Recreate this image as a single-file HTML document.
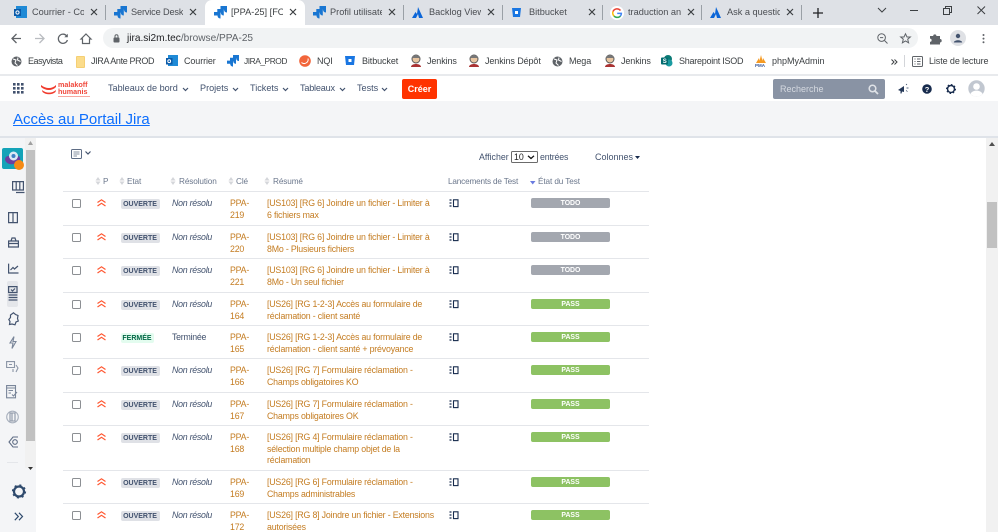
<!DOCTYPE html>
<html lang="fr"><head><meta charset="utf-8"><title>Jira</title>
<style>
html,body{margin:0;padding:0;width:998px;height:532px;overflow:hidden;background:#fff;font-family:"Liberation Sans",sans-serif;}
body{filter:blur(.3px);}
.a{position:absolute;white-space:nowrap;}
svg{position:absolute;overflow:visible;}
.tab{position:absolute;top:4px;height:17px;line-height:17px;font-size:9.2px;color:#4a4d52;white-space:nowrap;overflow:hidden;}
.x{position:absolute;top:5px;font-size:0;}
.sep{position:absolute;top:5px;width:1px;height:15px;background:#9aa0a6;}
.bm{position:absolute;top:55px;font-size:9px;line-height:12px;color:#3c4043;white-space:nowrap;letter-spacing:-.1px;}
.nav{position:absolute;top:82px;font-size:9.1px;line-height:13px;color:#42526e;white-space:nowrap;}
.row{position:absolute;left:63px;width:586px;border-top:1px solid #e4e6ea;}
.cb{position:absolute;left:9px;top:7px;width:7px;height:7px;border:1px solid #8c8f93;border-radius:1.5px;background:#fff;}
.lz{position:absolute;left:271px;}
.st{position:absolute;left:57.5px;top:7px;width:39px;height:10px;line-height:11.5px;border-radius:2px;background:#dfe1e6;color:#42526e;font-size:7px;font-weight:bold;text-align:center;}
.st.f{background:#e3fcef;color:#006644;width:33px;}
.re{position:absolute;left:109px;top:5px;font-size:8.8px;font-style:italic;color:#42526e;line-height:12px;white-space:nowrap;letter-spacing:-.25px;}
.re.n{font-style:normal;}
.k{position:absolute;left:167px;top:6px;font-size:8.8px;line-height:11.7px;color:#c47c21;letter-spacing:-.2px;}
.s{position:absolute;left:204px;top:6px;width:175px;font-size:8.8px;line-height:11.7px;color:#c47c21;white-space:nowrap;letter-spacing:-.18px;}
.bar{position:absolute;left:468px;top:6px;width:79px;height:10px;line-height:12px;border-radius:2px;font-size:6.9px;font-weight:bold;color:#fff;text-align:center;}
.t{background:#a3a7af;}
.p{background:#8dc263;}
.h{position:absolute;top:176px;font-size:8.2px;line-height:11px;color:#6b778c;white-space:nowrap;letter-spacing:-.1px;}
.so{position:absolute;top:177px;width:0;height:0;}
.sb{stroke:#44546f;stroke-width:1.2;fill:none;}
</style></head><body>

<!-- tab strip -->
<div class="a" style="left:0;top:0;width:998px;height:25px;background:#dee1e6"></div>
<div class="a" style="left:205px;top:0;width:100px;height:25px;background:#fff;border-radius:7px 7px 0 0"></div>

<svg style="left:14px;top:6px" width="14" height="13"><rect x="2" y="0" width="11" height="12" fill="#1f8ad6"/><rect x="0" y="3" width="7" height="7" fill="#0b5aa8"/><circle cx="3.5" cy="6.5" r="1.6" fill="none" stroke="#fff"/></svg>
<div class="tab" style="left:32px;width:52px">Courrier - Cor</div>
<svg class="x" style="left:90px;top:8px" width="8" height="8"><path d="M1 1L7 7M7 1L1 7" stroke="#3c4043" stroke-width="1.2"/></svg>
<div class="sep" style="left:105px"></div>

<svg style="left:114px;top:6px" width="13" height="13"><g fill="#1976d2"><path d="M6.500 0H13V6.500C11 6.500 10 5 10 3.500H6.500Z"/><path d="M3.300 3H9.800V9.500C7.800 9.500 6.800 8 6.800 6.500H3.300Z"/><path d="M0 6H6.500V12.500C4.500 12.500 3.500 11 3.500 9.500H0Z"/></g></svg>
<div class="tab" style="left:131px;letter-spacing:-.15px">Service Desk</div>
<svg class="x" style="left:189px;top:8px" width="8" height="8"><path d="M1 1L7 7M7 1L1 7" stroke="#3c4043" stroke-width="1.2"/></svg>

<svg style="left:214px;top:6px" width="13" height="13"><g fill="#1976d2"><path d="M6.500 0H13V6.500C11 6.500 10 5 10 3.500H6.500Z"/><path d="M3.300 3H9.800V9.500C7.800 9.500 6.800 8 6.800 6.500H3.300Z"/><path d="M0 6H6.500V12.500C4.500 12.500 3.500 11 3.500 9.500H0Z"/></g></svg>
<div class="tab" style="left:231px;width:52px;color:#3c4043">[PPA-25] [FOF</div>
<svg class="x" style="left:289px;top:8px" width="8" height="8"><path d="M1 1L7 7M7 1L1 7" stroke="#3c4043" stroke-width="1.2"/></svg>

<svg style="left:313px;top:6px" width="13" height="13"><g fill="#1976d2"><path d="M6.500 0H13V6.500C11 6.500 10 5 10 3.500H6.500Z"/><path d="M3.300 3H9.800V9.500C7.800 9.500 6.800 8 6.800 6.500H3.300Z"/><path d="M0 6H6.500V12.500C4.500 12.500 3.500 11 3.500 9.500H0Z"/></g></svg>
<div class="tab" style="left:330px;width:52px">Profil utilisate</div>
<svg class="x" style="left:388px;top:8px" width="8" height="8"><path d="M1 1L7 7M7 1L1 7" stroke="#3c4043" stroke-width="1.2"/></svg>
<div class="sep" style="left:403px"></div>

<svg style="left:412px;top:7px" width="12" height="12"><path d="M6 0L11 11H7L6 7 4 11H0L3.5 5 5 7Z" fill="#0c66d8"/></svg>
<div class="tab" style="left:429px;width:52px">Backlog View</div>
<svg class="x" style="left:487px;top:8px" width="8" height="8"><path d="M1 1L7 7M7 1L1 7" stroke="#3c4043" stroke-width="1.2"/></svg>
<div class="sep" style="left:502px"></div>

<svg style="left:512px;top:8px" width="11" height="10"><path d="M0 0H9L8 9H1Z" fill="#1976e2"/><rect x="3" y="3" width="3" height="3" fill="#fff"/></svg>
<div class="tab" style="left:529px">Bitbucket</div>
<svg class="x" style="left:588px;top:8px" width="8" height="8"><path d="M1 1L7 7M7 1L1 7" stroke="#3c4043" stroke-width="1.2"/></svg>
<div class="sep" style="left:602px"></div>

<svg style="left:610px;top:6px" width="14" height="14"><circle cx="7" cy="7" r="7" fill="#fff"/><path d="M10.500 4.500A4.400 4.400 0 0 0 3 5.500" fill="none" stroke="#ea4335" stroke-width="1.500"/><path d="M3 5.500A4.400 4.400 0 0 0 4 10" fill="none" stroke="#fbbc05" stroke-width="1.500"/><path d="M4 10A4.400 4.400 0 0 0 10.500 10" fill="none" stroke="#34a853" stroke-width="1.500"/><path d="M7.200 7.400H11.400A4 4 0 0 1 10.400 10" fill="none" stroke="#4285f4" stroke-width="1.500"/></svg>
<div class="tab" style="left:628px;width:53px">traduction an</div>
<svg class="x" style="left:687px;top:8px" width="8" height="8"><path d="M1 1L7 7M7 1L1 7" stroke="#3c4043" stroke-width="1.2"/></svg>
<div class="sep" style="left:701px"></div>

<svg style="left:710px;top:7px" width="12" height="12"><path d="M6 0L11 11H7L6 7 4 11H0L3.5 5 5 7Z" fill="#0c66d8"/></svg>
<div class="tab" style="left:727px;width:53px">Ask a questio</div>
<svg class="x" style="left:786px;top:8px" width="8" height="8"><path d="M1 1L7 7M7 1L1 7" stroke="#3c4043" stroke-width="1.2"/></svg>
<div class="sep" style="left:801px"></div>
<svg style="left:813px;top:8px" width="10" height="10"><path d="M5 0V10M0 5H10" stroke="#202124" stroke-width="1.3"/></svg>

<svg style="left:877px;top:7px" width="10" height="6"><path d="M1 1L5 5 9 1" fill="none" stroke="#3c4043"/></svg>
<svg style="left:910px;top:10px" width="9" height="2"><path d="M0 .5H8" stroke="#3c4043"/></svg>
<svg style="left:943px;top:6px" width="9" height="9"><path d="M.5 2.500H6.500V8.500H.5ZM2.500 2.500V.5H8.500V6.500H6.500" fill="none" stroke="#3c4043"/></svg>
<svg style="left:977px;top:6px" width="9" height="9"><path d="M.5.5L8 8M8 .5L.5 8" stroke="#3c4043"/></svg>

<!-- toolbar -->
<div class="a" style="left:0;top:25px;width:998px;height:23px;background:#fff"></div>
<svg style="left:11px;top:33px" width="11" height="11"><path d="M10 5.500H1.500M5.500 1L1 5.500 5.500 10" fill="none" stroke="#5f6368" stroke-width="1.300"/></svg>
<svg style="left:34px;top:33px" width="11" height="11"><path d="M1 5.500H9.500M5.500 1L10 5.500 5.500 10" fill="none" stroke="#b9bcc0" stroke-width="1.300"/></svg>
<svg style="left:57px;top:33px" width="12" height="11"><path d="M10 3.500A4.600 4.600 0 1 0 10.400 7" fill="none" stroke="#5f6368" stroke-width="1.300"/><path d="M10.800 0.800V4.300H7.300Z" fill="#5f6368"/></svg>
<svg style="left:80px;top:33px" width="12" height="11"><path d="M6 1L11 6H9.500V10.500H2.500V6H1Z" fill="none" stroke="#5f6368" stroke-width="1.200"/></svg>
<div class="a" style="left:103px;top:28px;width:815px;height:20px;background:#f1f3f4;border-radius:10px"></div>
<svg style="left:113px;top:34px" width="7" height="9"><rect x="0.500" y="3.500" width="6" height="5" rx="1" fill="#5f6368"/><path d="M2 4V2.200A1.500 1.500 0 0 1 5 2.200V4" fill="none" stroke="#5f6368"/></svg>
<div class="a" style="left:127px;top:32px;font-size:10.1px;line-height:13px;color:#202124">jira.si2m.tec<span style="color:#5f6368">/browse/PPA-25</span></div>
<svg style="left:877px;top:33px" width="11" height="11"><circle cx="4.600" cy="4.600" r="3.800" fill="none" stroke="#5f6368"/><path d="M7.500 7.500L10.500 10.500M3 4.600H6.200" stroke="#5f6368"/></svg>
<svg style="left:900px;top:33px" width="11" height="11"><path d="M5.500.8L7 4H10.300L7.700 6.200 8.600 9.800 5.500 7.900 2.400 9.800 3.300 6.200.7 4H4Z" fill="none" stroke="#5f6368"/></svg>
<svg style="left:930px;top:33px" width="12" height="12"><path d="M0 3H3.200A1.600 1.600 0 0 1 6.400 3H10V6A1.600 1.600 0 0 1 10 9.400V11.500H0V8.800A1.600 1.600 0 0 0 0 5.600Z" fill="#5f6368"/></svg>
<div class="a" style="left:950px;top:30px;width:16px;height:16px;border-radius:8px;background:#dfe1e5"></div>
<svg style="left:953px;top:33px" width="10" height="10"><circle cx="5" cy="3" r="2.200" fill="#44546f"/><path d="M.8 9.500C1 6.500 9 6.500 9.200 9.500Z" fill="#44546f"/></svg>
<svg style="left:982px;top:34px" width="3" height="10"><circle cx="1.500" cy="1" r="1" fill="#5f6368"/><circle cx="1.500" cy="4.600" r="1" fill="#5f6368"/><circle cx="1.500" cy="8.200" r="1" fill="#5f6368"/></svg>

<!-- bookmarks -->
<svg style="left:11px;top:56px" width="11" height="11"><circle cx="5.500" cy="5.500" r="5" fill="#5f6368"/><path d="M2 3L5 4 4 7 6.500 9.500M7 1.500L6.500 4 9.500 5.500" fill="none" stroke="#fff"/></svg>
<div class="bm" style="left:28px;letter-spacing:-.45px">Easyvista</div>
<div class="a" style="left:76px;top:56px;width:7px;height:10px;background:#fbdc8b;border:1px solid #f5cf74;border-radius:1px"></div>
<div class="bm" style="left:91px;letter-spacing:-.35px">JIRA Ante PROD</div>
<svg style="left:166px;top:55px" width="12" height="12"><rect x="2" y="0" width="10" height="11" fill="#1f8ad6"/><rect x="0" y="3" width="6.500" height="6.500" fill="#0b5aa8"/><circle cx="3.200" cy="6.200" r="1.400" fill="none" stroke="#fff"/></svg>
<div class="bm" style="left:184px">Courrier</div>
<svg style="left:227px;top:55px" width="12" height="12"><g fill="#1976d2"><path d="M6 0H12V6C10 6 9.200 4.600 9.200 3.200H6Z"/><path d="M3 2.800H9V8.800C7 8.800 6.200 7.400 6.200 6H3Z"/><path d="M0 5.600H6V11.600C4 11.600 3.200 10.200 3.200 8.800H0Z"/></g></svg>
<div class="bm" style="left:244px;font-size:8.400px;letter-spacing:-.45px">JIRA_PROD</div>
<svg style="left:299px;top:55px" width="12" height="12"><circle cx="6" cy="6" r="5.800" fill="#f2653a"/><path d="M2.500 7.500A4 4 0 0 0 9 3.500" fill="none" stroke="#fff"/></svg>
<div class="bm" style="left:317px">NQI</div>
<svg style="left:345px;top:56px" width="11" height="10"><path d="M0 0H10L9 9H1Z" fill="#1976e2"/><rect x="3.500" y="3" width="3" height="3" fill="#fff"/></svg>
<div class="bm" style="left:362px">Bitbucket</div>
<svg style="left:410px;top:54px" width="12" height="13"><path d="M1 13C1 9 11 9 11 13Z" fill="#a33"/><circle cx="6" cy="5" r="4" fill="#e8c5a0" stroke="#555"/><path d="M2 4C3 0 9 0 10 4Z" fill="#777"/></svg>
<div class="bm" style="left:427px">Jenkins</div>
<svg style="left:468px;top:54px" width="12" height="13"><path d="M1 13C1 9 11 9 11 13Z" fill="#a33"/><circle cx="6" cy="5" r="4" fill="#e8c5a0" stroke="#555"/><path d="M2 4C3 0 9 0 10 4Z" fill="#777"/></svg>
<div class="bm" style="left:485px">Jenkins Dépôt</div>
<svg style="left:552px;top:56px" width="11" height="11"><circle cx="5.500" cy="5.500" r="5" fill="#5f6368"/><path d="M2 3L5 4 4 7 6.500 9.500M7 1.500L6.500 4 9.500 5.500" fill="none" stroke="#fff"/></svg>
<div class="bm" style="left:569px">Mega</div>
<svg style="left:604px;top:54px" width="12" height="13"><path d="M1 13C1 9 11 9 11 13Z" fill="#a33"/><circle cx="6" cy="5" r="4" fill="#e8c5a0" stroke="#555"/><path d="M2 4C3 0 9 0 10 4Z" fill="#777"/></svg>
<div class="bm" style="left:621px">Jenkins</div>
<svg style="left:661px;top:55px" width="12" height="12"><circle cx="7" cy="4" r="4" fill="#0b7a75"/><circle cx="8" cy="8" r="3.500" fill="#1a9ba1"/><rect x="0" y="2.500" width="7" height="7" rx="1" fill="#036c70"/><text x="1.800" y="8" font-size="6" font-weight="bold" fill="#fff" font-family="Liberation Sans">S</text></svg>
<div class="bm" style="left:679px;letter-spacing:-.25px">Sharepoint ISOD</div>
<svg style="left:755px;top:55px" width="12" height="12"><path d="M4 8L6 0 8 8ZM1 8L4 3 5 8ZM7 8L8 3 11 8Z" fill="#f59a23"/><text x="0" y="12" font-size="4.500" font-weight="bold" fill="#3b5998" font-family="Liberation Sans">PMA</text></svg>
<div class="bm" style="left:772px;letter-spacing:0">phpMyAdmin</div>
<svg style="left:891px;top:59px" width="7" height="6"><path d="M.5.500L3 3 .5 5.500M3.500.500L6 3 3.500 5.500" fill="none" stroke="#3c4043"/></svg>
<div class="a" style="left:904px;top:55px;width:1px;height:12px;background:#d3d5d9"></div>
<svg style="left:912px;top:56px" width="11" height="11"><rect x=".5" y=".5" width="10" height="10" rx="1" fill="none" stroke="#5f6368"/><path d="M2.500 3H3.500M5 3H8.500M2.500 5.500H3.500M5 5.500H8.500M2.500 8H3.500M5 8H8.500" stroke="#5f6368"/></svg>
<div class="bm" style="left:929px">Liste de lecture</div>

<div class="a" style="left:0;top:74px;width:998px;height:2px;background:#e8eaed"></div>

<!-- jira nav -->
<div class="a" style="left:0;top:76px;width:998px;height:25px;background:#fff"></div>
<svg style="left:13px;top:83px" width="11" height="11" fill="#42526e"><rect x="0" y="0" width="2.600" height="2.600"/><rect x="4" y="0" width="2.600" height="2.600"/><rect x="8" y="0" width="2.600" height="2.600"/><rect x="0" y="4" width="2.600" height="2.600"/><rect x="4" y="4" width="2.600" height="2.600"/><rect x="8" y="4" width="2.600" height="2.600"/><rect x="0" y="8" width="2.600" height="2.600"/><rect x="4" y="8" width="2.600" height="2.600"/><rect x="8" y="8" width="2.600" height="2.600"/></svg>
<svg style="left:41px;top:84px" width="16" height="11"><path d="M0 1C5 5 11 5 15 1L15 3C11 7 5 7 0 3ZM1 6C5 9.500 11 9.500 15 6L14.500 8C11 11 5 11 1.500 8Z" fill="#f03a2c"/></svg>
<div class="a" style="left:58px;top:81px;font-size:7.200px;line-height:7px;font-weight:bold;color:#f0483c">malakoff<br>humanis</div>
<div class="a" style="left:58px;top:95.500px;width:32px;height:1px;background:#f7a8a0"></div>
<div class="nav" style="left:108px">Tableaux de bord</div>
<svg style="left:182px;top:87px" width="7" height="5"><path d="M1 1L3.500 3.500 6 1" fill="none" stroke="#42526e" stroke-width="1.200"/></svg>
<div class="nav" style="left:200px">Projets</div>
<svg style="left:232px;top:87px" width="7" height="5"><path d="M1 1L3.500 3.500 6 1" fill="none" stroke="#42526e" stroke-width="1.200"/></svg>
<div class="nav" style="left:250px">Tickets</div>
<svg style="left:282px;top:87px" width="7" height="5"><path d="M1 1L3.500 3.500 6 1" fill="none" stroke="#42526e" stroke-width="1.200"/></svg>
<div class="nav" style="left:300px;letter-spacing:-.2px">Tableaux</div>
<svg style="left:339px;top:87px" width="7" height="5"><path d="M1 1L3.500 3.500 6 1" fill="none" stroke="#42526e" stroke-width="1.200"/></svg>
<div class="nav" style="left:357px">Tests</div>
<svg style="left:381px;top:87px" width="7" height="5"><path d="M1 1L3.500 3.500 6 1" fill="none" stroke="#42526e" stroke-width="1.200"/></svg>
<div class="a" style="left:402px;top:79px;width:35px;height:20px;line-height:20px;background:#ff3300;color:#fff;border-radius:2px;text-align:center;font-size:9px;font-weight:bold">Créer</div>
<div class="a" style="left:773px;top:79px;width:112px;height:20px;background:#8993a4;border-radius:2px"></div>
<div class="a" style="left:780px;top:82px;font-size:9px;line-height:14px;color:#d5d9e0">Recherche</div>
<svg style="left:868px;top:84px" width="11" height="11"><circle cx="4.500" cy="4.500" r="3.300" fill="none" stroke="#dfe2e7" stroke-width="1.500"/><path d="M7 7L10 10" stroke="#dfe2e7" stroke-width="1.800"/></svg>
<svg style="left:898px;top:84px" width="11" height="10"><path d="M0 6L6 2V8L4 7.500 3.500 9.500 2.500 9.500 2.500 7Z" fill="#253858"/><path d="M8 1L9 0M8.500 4H10.500M8 6.500L9.500 7.500" stroke="#253858" stroke-width=".7"/></svg>
<svg style="left:922px;top:84px" width="10" height="10"><circle cx="5" cy="5" r="4.800" fill="#172b4d"/><text x="2.800" y="8" font-size="7.500" font-weight="bold" fill="#fff" font-family="Liberation Sans">?</text></svg>
<svg style="left:946px;top:84px" width="10" height="10"><circle cx="5" cy="5" r="3.500" fill="none" stroke="#172b4d" stroke-width="1.500"/><circle cx="5" cy="5" r="4.500" fill="none" stroke="#172b4d" stroke-width="1" stroke-dasharray="1.500 2"/></svg>
<svg style="left:968px;top:80px" width="17" height="17"><circle cx="8.500" cy="8.500" r="8.200" fill="#c1c7d0"/><circle cx="8.500" cy="6.500" r="3.300" fill="#fff"/><path d="M2.500 14C4 9.500 13 9.500 14.500 14A8 8 0 0 1 2.500 14Z" fill="#fff"/></svg>

<!-- banner -->
<div class="a" style="left:0;top:101px;width:998px;height:35px;background:#f4f5f7"></div>
<div class="a" style="left:13px;top:109px;font-size:15px;line-height:22px;color:#0d6efd;text-decoration:underline">Accès au Portail Jira</div>
<div class="a" style="left:0;top:136px;width:998px;height:2px;background:#dfe3e9"></div>

<!-- sidebar -->
<div class="a" style="left:0;top:138px;width:36px;height:394px;background:#f4f5f7"></div>
<div class="a" style="left:25px;top:138px;width:11px;height:330px;background:#f1f1f1"></div>
<div class="a" style="left:26px;top:150px;width:9px;height:291px;background:#c1c1c1"></div>
<svg style="left:28px;top:141px" width="5" height="4"><path d="M2.500 0L5 4H0Z" fill="#a0a0a0"/></svg>
<svg style="left:28px;top:467px" width="5" height="3"><path d="M0 0H5L2.500 3Z" fill="#333"/></svg>

<div class="a" style="left:2px;top:148px;width:21px;height:21px;background:#14a3b8;border-radius:2px"></div>
<svg style="left:3px;top:149px" width="21" height="20"><path d="M2 11C2 7 5 7 6 7 6 3 14 3 15 7 18 7 18 14 14 14 10 16 4 16 2 11Z" fill="#6b3fa0"/><circle cx="10.500" cy="7" r="4.500" fill="#dce9f5"/><circle cx="10.500" cy="7" r="2" fill="#3f7fc4"/></svg>
<div class="a" style="left:14px;top:160px;width:10px;height:10px;border-radius:5px;background:#f58a16"></div>

<svg style="left:12px;top:181px" width="13" height="13"><path class="sb" d="M.6 .6H11.400V9H.6ZM4.200 .6V9M7.800 .6V9M4 11.500H12.500"/></svg>
<svg style="left:8px;top:212px" width="11" height="12"><path class="sb" d="M.6 .6H9.400V10.600H.6ZM5 .6V10.600"/></svg>
<svg style="left:8px;top:237px" width="11" height="12"><path class="sb" d="M3 4L4 1H7L8 4M.6 6.500H10.400M.6 4H10.400V10H.6Z"/></svg>
<svg style="left:8px;top:263px" width="11" height="11"><path class="sb" d="M.6 .6V10H10.500M2.500 7L5 4.500 6.500 6 10 3"/></svg>
<div class="a" style="left:7px;top:281px;width:11px;height:26px;background:#e4e6ea;border-radius:2px"></div>
<svg style="left:8px;top:286px" width="10" height="15"><path class="sb" d="M.6 .6H9V6.500H.6ZM3 3.500L4.500 5 7 2.500M.6 9H9.400M.6 11.500H9.400M.6 14H9.400"/></svg>
<svg style="left:8px;top:312px" width="11" height="14"><path class="sb" d="M5.500 .8L7.500 2.500 10 3.500 9.500 6.500 10.300 9 8 10 7 12.800 4 12 1.500 12.500 2 9.500 .8 7.500 2.500 5.500 2.500 3Z"/></svg>
<svg style="left:9px;top:336px" width="8" height="13"><path d="M5 .6L1 7H4L3 12.500 7 5.500H4Z" fill="none" stroke="#7a869a" stroke-width="1.100"/></svg>
<svg style="left:6px;top:361px" width="13" height="13"><path d="M.6 .6H8.500V6.500H.6ZM3 3.500H6M10 4L12 7 10 11M7 8V11" fill="none" stroke="#8b95a6" stroke-width="1.100"/></svg>
<svg style="left:6px;top:385px" width="12" height="14"><path d="M.6 .6H9.500V12.800H.6ZM.6 3H9.500M2.500 5.500H7M2.500 8H5M6 9.500L7.500 11 11 7" fill="none" stroke="#7a869a" stroke-width="1.100"/></svg>
<svg style="left:6px;top:410px" width="13" height="14"><circle cx="6.500" cy="7" r="5.800" fill="none" stroke="#a8b0bd" stroke-width="1.100"/><path d="M4 3H9V11H4ZM6 3V11" fill="none" stroke="#8b95a6" stroke-width="1.100"/></svg>
<svg style="left:8px;top:436px" width="11" height="12"><path d="M10 1H5L1 6 5 11H10" fill="none" stroke="#5e6c84" stroke-width="1.100"/><circle cx="7" cy="6" r="2.300" fill="none" stroke="#5e6c84" stroke-width="1.100"/></svg>
<div class="a" style="left:7px;top:462px;width:11px;height:1px;background:#e4e6ea"></div>
<svg style="left:12px;top:484px" width="14" height="15"><circle cx="7" cy="7.500" r="5" fill="none" stroke="#2f4a6d" stroke-width="2.200"/><circle cx="7" cy="7.500" r="6.200" fill="none" stroke="#2f4a6d" stroke-width="1.800" stroke-dasharray="2 2.900"/></svg>
<svg style="left:14px;top:512px" width="10" height="9"><path d="M.8 .8L4.300 4.500 .8 8.200M5 .8L8.500 4.500 5 8.200" fill="none" stroke="#2f4a6d" stroke-width="1.200"/></svg>

<!-- table top controls -->
<svg style="left:71px;top:149px" width="21" height="12"><rect x=".5" y=".5" width="10" height="9" rx="1" fill="none" stroke="#5e6c84"/><path d="M2.500 3H8.500M2.500 5H8.500M2.500 7H6" stroke="#5e6c84" stroke-width=".8"/><path d="M14.500 2.500L17 5 19.500 2.500" fill="none" stroke="#42526e" stroke-width="1.200"/></svg>
<div class="a" style="left:479px;top:151px;font-size:8.800px;line-height:12px;color:#42526e">Afficher</div>
<div class="a" style="left:511px;top:151px;width:25px;height:10px;border:1px solid #6b6b6b;border-radius:1.500px;font-size:8.800px;line-height:10px;color:#222;text-indent:2px;background:#fff">10</div>
<svg style="left:527px;top:155px" width="8" height="5"><path d="M1 .8L4 3.500 7 .8" fill="none" stroke="#111" stroke-width="1.300"/></svg>
<div class="a" style="left:540px;top:151px;font-size:8.800px;line-height:12px;color:#42526e;letter-spacing:-.15px">entrées</div>
<div class="a" style="left:595px;top:151px;font-size:9px;line-height:13px;color:#42526e">Colonnes</div>
<svg style="left:635px;top:156px" width="5" height="3"><path d="M0 0H5L2.500 3Z" fill="#172b4d"/></svg>

<!-- headers -->
<svg style="left:95px;top:176px" width="6" height="10" fill="#d4d6da"><path d="M3 1L5.500 4.500H.5ZM3 9L.5 5.500H5.500Z"/></svg>
<div class="h" style="left:103px">P</div>
<svg style="left:119px;top:176px" width="6" height="10" fill="#d4d6da"><path d="M3 1L5.500 4.500H.5ZM3 9L.5 5.500H5.500Z"/></svg>
<div class="h" style="left:127px">Etat</div>
<svg style="left:170px;top:176px" width="6" height="10" fill="#d4d6da"><path d="M3 1L5.500 4.500H.5ZM3 9L.5 5.500H5.500Z"/></svg>
<div class="h" style="left:179px">Résolution</div>
<svg style="left:228px;top:176px" width="6" height="10" fill="#d4d6da"><path d="M3 1L5.500 4.500H.5ZM3 9L.5 5.500H5.500Z"/></svg>
<div class="h" style="left:236px">Clé</div>
<svg style="left:264px;top:176px" width="6" height="10" fill="#d4d6da"><path d="M3 1L5.500 4.500H.5ZM3 9L.5 5.500H5.500Z"/></svg>
<div class="h" style="left:273px">Résumé</div>
<div class="h" style="left:448px;letter-spacing:-.17px">Lancements de Test</div>
<svg style="left:530px;top:180px" width="6" height="5"><path d="M0 1H5.500L2.700 4.500Z" fill="#6a7be0"/></svg>
<div class="h" style="left:538px">État du Test</div>

<!-- rows -->
<div class="row" style="top:191px">
<div class="cb"></div><svg style="left:34px;top:7px" width="9" height="8"><path d="M.5 3.500L4.500 .8 8.500 3.500M.5 7L4.500 4.300 8.500 7" fill="none" stroke="#ff5630" stroke-width="1.200"/></svg>
<div class="st">OUVERTE</div><div class="re">Non résolu</div><div class="k">PPA-<br>219</div>
<div class="s">[US103] [RG 6] Joindre un fichier - Limiter à<br>6 fichiers max</div>
<svg class="lz" style="left:386px;top:7px" width="10" height="9"><path d="M.5 1H2.500M.5 4H2.500M.5 7H2.500" stroke="#172b4d" stroke-width="1.300"/><rect x="4.500" y=".8" width="4.500" height="6.800" fill="none" stroke="#172b4d" stroke-width="1.100"/></svg>
<div class="bar t">TODO</div></div>

<div class="row" style="top:225px">
<div class="cb"></div><svg style="left:34px;top:7px" width="9" height="8"><path d="M.5 3.500L4.500 .8 8.500 3.500M.5 7L4.500 4.300 8.500 7" fill="none" stroke="#ff5630" stroke-width="1.200"/></svg>
<div class="st">OUVERTE</div><div class="re">Non résolu</div><div class="k">PPA-<br>220</div>
<div class="s">[US103] [RG 6] Joindre un fichier - Limiter à<br>8Mo - Plusieurs fichiers</div>
<svg class="lz" style="left:386px;top:7px" width="10" height="9"><path d="M.5 1H2.500M.5 4H2.500M.5 7H2.500" stroke="#172b4d" stroke-width="1.300"/><rect x="4.500" y=".8" width="4.500" height="6.800" fill="none" stroke="#172b4d" stroke-width="1.100"/></svg>
<div class="bar t">TODO</div></div>

<div class="row" style="top:258px">
<div class="cb"></div><svg style="left:34px;top:7px" width="9" height="8"><path d="M.5 3.500L4.500 .8 8.500 3.500M.5 7L4.500 4.300 8.500 7" fill="none" stroke="#ff5630" stroke-width="1.200"/></svg>
<div class="st">OUVERTE</div><div class="re">Non résolu</div><div class="k">PPA-<br>221</div>
<div class="s">[US103] [RG 6] Joindre un fichier - Limiter à<br>8Mo - Un seul fichier</div>
<svg class="lz" style="left:386px;top:7px" width="10" height="9"><path d="M.5 1H2.500M.5 4H2.500M.5 7H2.500" stroke="#172b4d" stroke-width="1.300"/><rect x="4.500" y=".8" width="4.500" height="6.800" fill="none" stroke="#172b4d" stroke-width="1.100"/></svg>
<div class="bar t">TODO</div></div>

<div class="row" style="top:292px">
<div class="cb"></div><svg style="left:34px;top:7px" width="9" height="8"><path d="M.5 3.500L4.500 .8 8.500 3.500M.5 7L4.500 4.300 8.500 7" fill="none" stroke="#ff5630" stroke-width="1.200"/></svg>
<div class="st">OUVERTE</div><div class="re">Non résolu</div><div class="k">PPA-<br>164</div>
<div class="s">[US26] [RG 1-2-3] Accès au formulaire de<br>réclamation - client santé</div>
<svg class="lz" style="left:386px;top:7px" width="10" height="9"><path d="M.5 1H2.500M.5 4H2.500M.5 7H2.500" stroke="#172b4d" stroke-width="1.300"/><rect x="4.500" y=".8" width="4.500" height="6.800" fill="none" stroke="#172b4d" stroke-width="1.100"/></svg>
<div class="bar p">PASS</div></div>

<div class="row" style="top:325px">
<div class="cb"></div><svg style="left:34px;top:7px" width="9" height="8"><path d="M.5 3.500L4.500 .8 8.500 3.500M.5 7L4.500 4.300 8.500 7" fill="none" stroke="#ff5630" stroke-width="1.200"/></svg>
<div class="st f">FERMÉE</div><div class="re n">Terminée</div><div class="k">PPA-<br>165</div>
<div class="s">[US26] [RG 1-2-3] Accès au formulaire de<br>réclamation - client santé + prévoyance</div>
<svg class="lz" style="left:386px;top:7px" width="10" height="9"><path d="M.5 1H2.500M.5 4H2.500M.5 7H2.500" stroke="#172b4d" stroke-width="1.300"/><rect x="4.500" y=".8" width="4.500" height="6.800" fill="none" stroke="#172b4d" stroke-width="1.100"/></svg>
<div class="bar p">PASS</div></div>

<div class="row" style="top:358px">
<div class="cb"></div><svg style="left:34px;top:7px" width="9" height="8"><path d="M.5 3.500L4.500 .8 8.500 3.500M.5 7L4.500 4.300 8.500 7" fill="none" stroke="#ff5630" stroke-width="1.200"/></svg>
<div class="st">OUVERTE</div><div class="re">Non résolu</div><div class="k">PPA-<br>166</div>
<div class="s">[US26] [RG 7] Formulaire réclamation -<br>Champs obligatoires KO</div>
<svg class="lz" style="left:386px;top:7px" width="10" height="9"><path d="M.5 1H2.500M.5 4H2.500M.5 7H2.500" stroke="#172b4d" stroke-width="1.300"/><rect x="4.500" y=".8" width="4.500" height="6.800" fill="none" stroke="#172b4d" stroke-width="1.100"/></svg>
<div class="bar p">PASS</div></div>

<div class="row" style="top:392px">
<div class="cb"></div><svg style="left:34px;top:7px" width="9" height="8"><path d="M.5 3.500L4.500 .8 8.500 3.500M.5 7L4.500 4.300 8.500 7" fill="none" stroke="#ff5630" stroke-width="1.200"/></svg>
<div class="st">OUVERTE</div><div class="re">Non résolu</div><div class="k">PPA-<br>167</div>
<div class="s">[US26] [RG 7] Formulaire réclamation -<br>Champs obligatoires OK</div>
<svg class="lz" style="left:386px;top:7px" width="10" height="9"><path d="M.5 1H2.500M.5 4H2.500M.5 7H2.500" stroke="#172b4d" stroke-width="1.300"/><rect x="4.500" y=".8" width="4.500" height="6.800" fill="none" stroke="#172b4d" stroke-width="1.100"/></svg>
<div class="bar p">PASS</div></div>

<div class="row" style="top:425px">
<div class="cb"></div><svg style="left:34px;top:7px" width="9" height="8"><path d="M.5 3.500L4.500 .8 8.500 3.500M.5 7L4.500 4.300 8.500 7" fill="none" stroke="#ff5630" stroke-width="1.200"/></svg>
<div class="st">OUVERTE</div><div class="re">Non résolu</div><div class="k">PPA-<br>168</div>
<div class="s">[US26] [RG 4] Formulaire réclamation -<br>sélection multiple champ objet de la<br>réclamation</div>
<svg class="lz" style="left:386px;top:7px" width="10" height="9"><path d="M.5 1H2.500M.5 4H2.500M.5 7H2.500" stroke="#172b4d" stroke-width="1.300"/><rect x="4.500" y=".8" width="4.500" height="6.800" fill="none" stroke="#172b4d" stroke-width="1.100"/></svg>
<div class="bar p">PASS</div></div>

<div class="row" style="top:470px">
<div class="cb"></div><svg style="left:34px;top:7px" width="9" height="8"><path d="M.5 3.500L4.500 .8 8.500 3.500M.5 7L4.500 4.300 8.500 7" fill="none" stroke="#ff5630" stroke-width="1.200"/></svg>
<div class="st">OUVERTE</div><div class="re">Non résolu</div><div class="k">PPA-<br>169</div>
<div class="s">[US26] [RG 6] Formulaire réclamation -<br>Champs administrables</div>
<svg class="lz" style="left:386px;top:7px" width="10" height="9"><path d="M.5 1H2.500M.5 4H2.500M.5 7H2.500" stroke="#172b4d" stroke-width="1.300"/><rect x="4.500" y=".8" width="4.500" height="6.800" fill="none" stroke="#172b4d" stroke-width="1.100"/></svg>
<div class="bar p">PASS</div></div>

<div class="row" style="top:503px">
<div class="cb"></div><svg style="left:34px;top:7px" width="9" height="8"><path d="M.5 3.500L4.500 .8 8.500 3.500M.5 7L4.500 4.300 8.500 7" fill="none" stroke="#ff5630" stroke-width="1.200"/></svg>
<div class="st">OUVERTE</div><div class="re">Non résolu</div><div class="k">PPA-<br>172</div>
<div class="s">[US26] [RG 8] Joindre un fichier - Extensions<br>autorisées</div>
<svg class="lz" style="left:386px;top:7px" width="10" height="9"><path d="M.5 1H2.500M.5 4H2.500M.5 7H2.500" stroke="#172b4d" stroke-width="1.300"/><rect x="4.500" y=".8" width="4.500" height="6.800" fill="none" stroke="#172b4d" stroke-width="1.100"/></svg>
<div class="bar p">PASS</div></div>

<!-- page scrollbar -->
<div class="a" style="left:986px;top:138px;width:12px;height:394px;background:#f1f1f1"></div>
<svg style="left:989px;top:142px" width="6" height="4"><path d="M3 0L6 4H0Z" fill="#505050"/></svg>
<div class="a" style="left:987px;top:202px;width:10px;height:46px;background:#c1c1c1"></div>

</body></html>
